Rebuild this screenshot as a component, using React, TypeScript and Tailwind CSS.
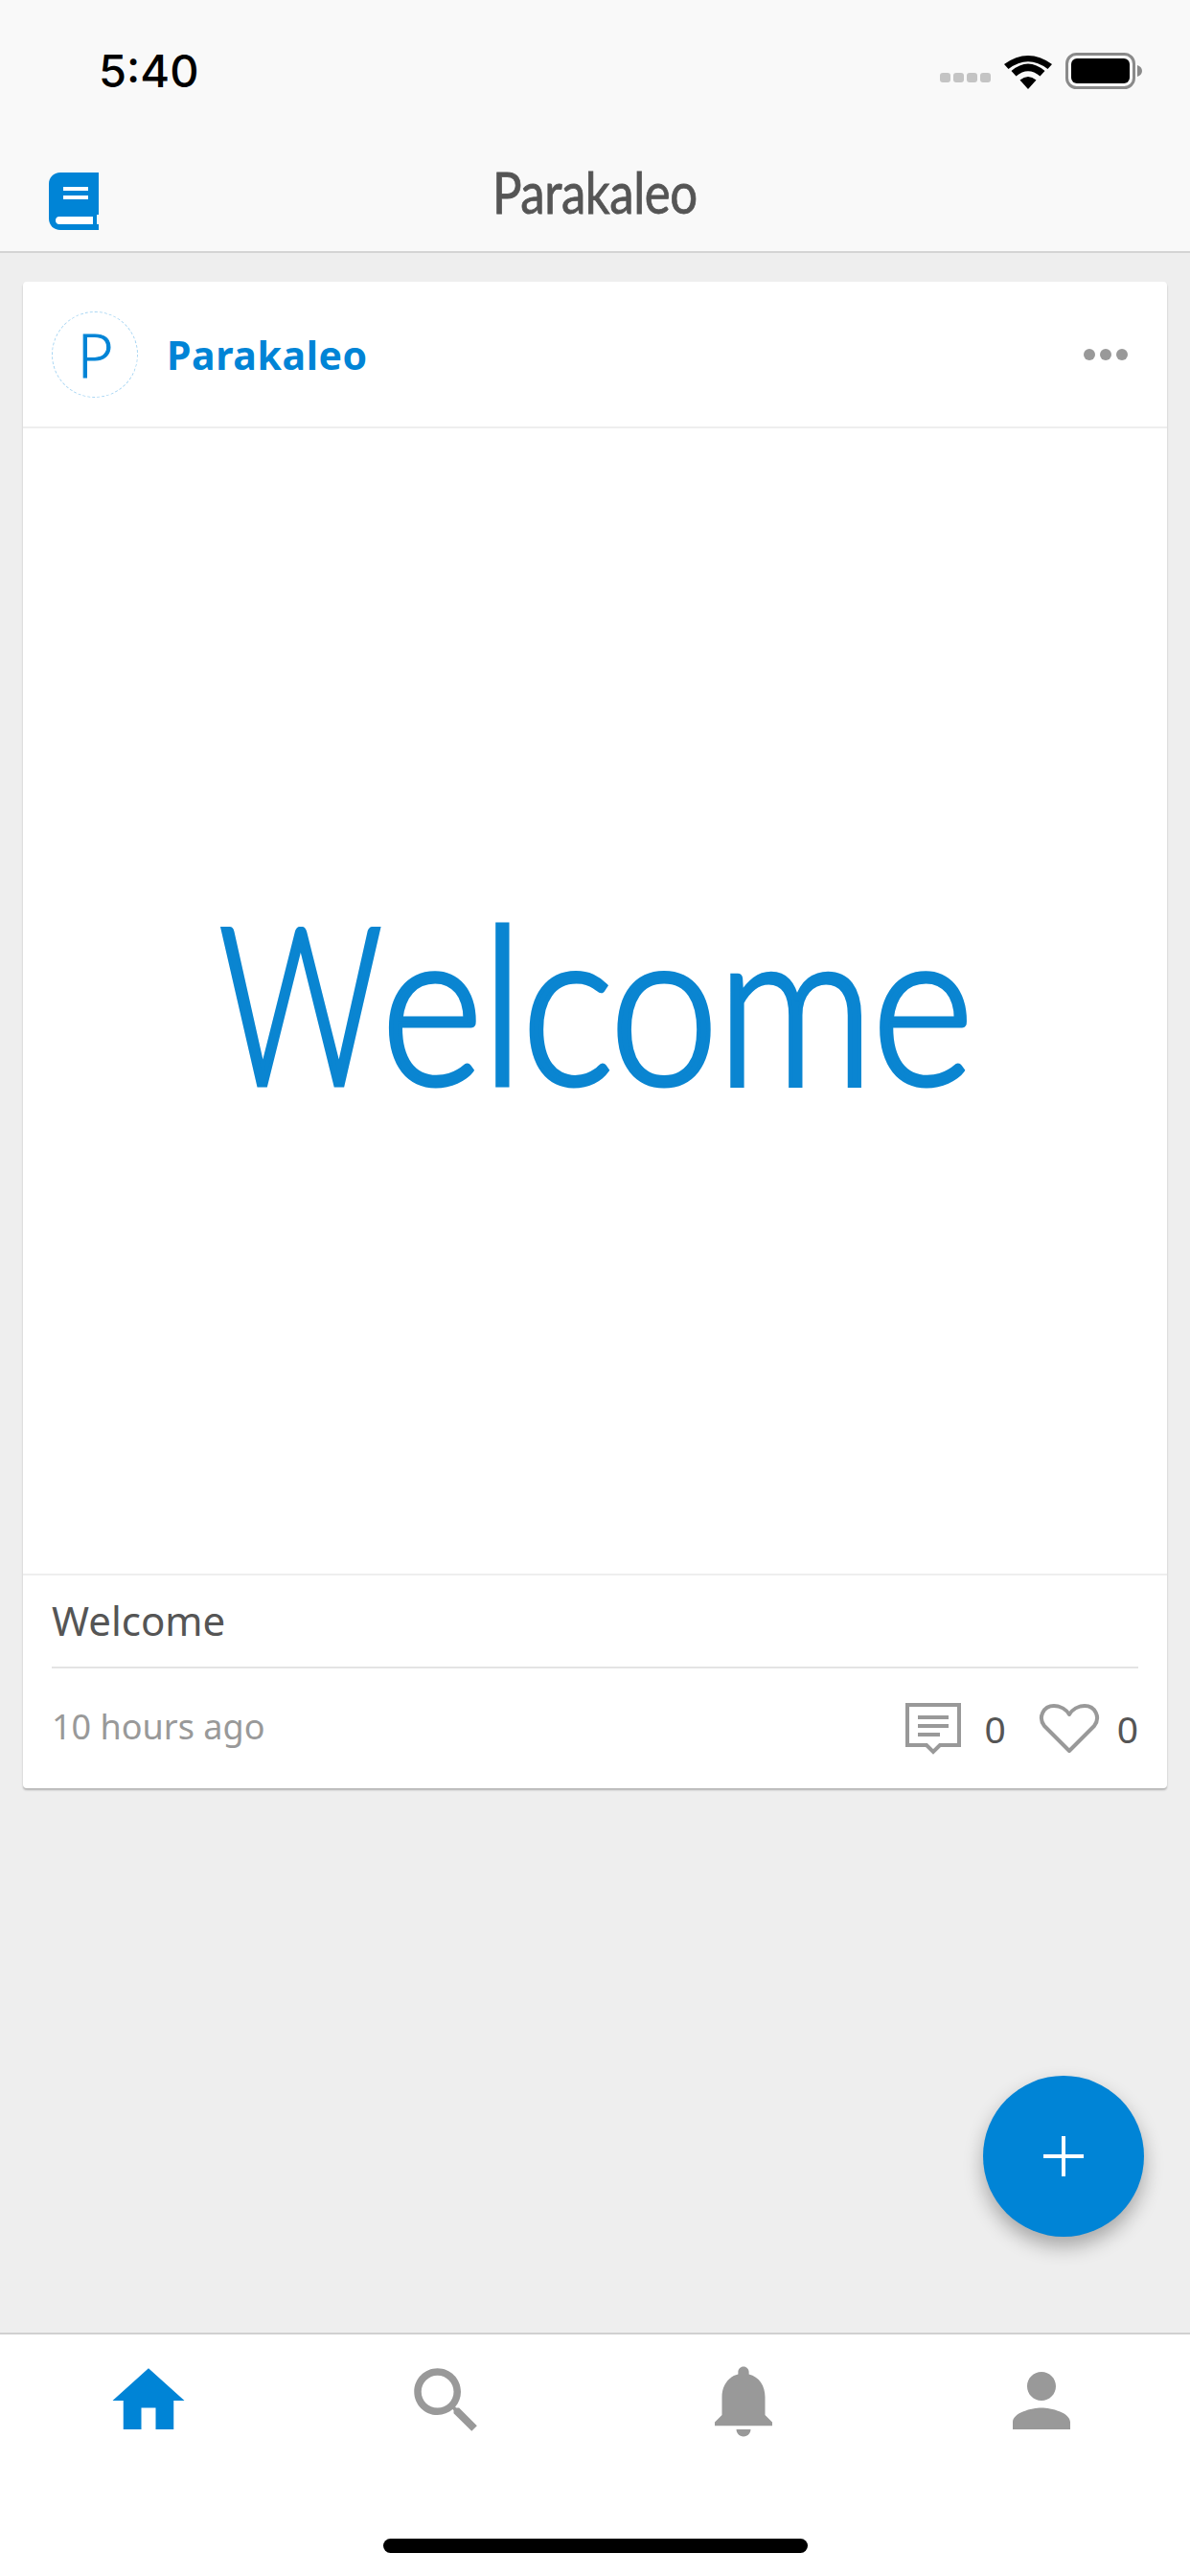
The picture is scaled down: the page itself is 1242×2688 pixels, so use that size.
import React from 'react'

const BLUE = 'text-[#0084d6]'

const icons: { d: string; color: string }[] = [
    { d: 'M10 20v-6h4v6h5v-8h3L12 3 2 12h3v8z', color: BLUE },
    { d: 'M15.5 14h-.79l-.28-.27C15.41 12.59 16 11.11 16 9.5 16 5.91 13.09 3 9.5 3S3 5.91 3 9.5 5.91 16 9.5 16c1.61 0 3.09-.59 4.23-1.57l.27.28v.79l5 4.99L20.49 19l-4.99-5zm-6 0C7.01 14 5 11.99 5 9.5S7.01 5 9.5 5 14 7.01 14 9.5 11.99 14 9.5 14z', color: 'text-[#999999]' },
    { d: 'M12 22c1.1 0 2-.9 2-2h-4c0 1.1.89 2 2 2zm6-6v-5c0-3.07-1.64-5.64-4.5-6.32V4c0-.83-.67-1.5-1.5-1.5s-1.5.67-1.5 1.5v.68C7.63 5.36 6 7.92 6 11v5l-2 2v1h16v-1l-2-2z', color: 'text-[#999999]' },
    { d: 'M12 12c2.21 0 4-1.79 4-4s-1.79-4-4-4-4 1.79-4 4 1.79 4 4 4zm0 2c-2.67 0-8 1.34-8 4v2h16v-2c0-2.66-5.33-4-8-4z', color: 'text-[#999999]' },
]

const StatusIcons = () => (
    <div className="flex items-center pt-[9px]">
        <div className="flex gap-[3px] mt-[14px]">
            {[0, 1, 2, 3].map(i => (
                <span key={i} className="h-[10px] w-[11px] rounded-[3px] bg-[#c4c4c4]" />
            ))}
        </div>
        <svg className="ml-[14px] h-[37px] w-[50px]" viewBox="0 0 50 37">
            <path d="M25 37 L16.5 27.5 Q25 20.5 33.5 27.5 Z" fill="#000" />
            <path d="M12.5 23 L7.5 17.5 Q25 2.5 42.5 17.5 L37.5 23 Q25 12.5 12.5 23 Z" transform="translate(0 0.5)" fill="#000" />
            <path d="M4.5 14 L0 9 Q25 -9 50 9 L45.5 14 Q25 -1.5 4.5 14 Z" transform="translate(0 2)" fill="#000" />
        </svg>
        <svg className="ml-[14px] h-[38px] w-[80px]" viewBox="0 0 80 38">
            <rect x="1.5" y="1.5" width="70" height="35" rx="10" fill="none" stroke="#8a8a8a" strokeWidth="3" />
            <rect x="6" y="6" width="61" height="26" rx="6" fill="#000" />
            <path d="M75 13 C78 14 80 16 80 19 C80 22 78 24 75 25 Z" fill="#8a8a8a" />
        </svg>
    </div>
)

const BookIcon = () => (
    <svg className="h-[60px] w-[52px] text-[#0084d6]" viewBox="0 0 52 60">
        <path d="M12 0 H52 V44 H50 V54 H52 V60 H12 C5 60 0 55 0 48 V12 C0 5 5 0 12 0 Z" fill="currentColor" />
        <rect x="15" y="15" width="26" height="4" fill="#fff" />
        <rect x="15" y="24" width="26" height="4" fill="#fff" />
        <path d="M11 46 H46 V54 H11 C8 54 7 52 7 50 C7 48 8 46 11 46 Z" fill="#fff" />
    </svg>
)

const CommentIcon = () => (
    <svg className="h-[54px] w-[58px]" viewBox="0 0 58 54" fill="none">
        <path d="M2 2 H56 V44 H36 L29 51 L22 44 H2 Z" stroke="#999" strokeWidth="4" />
        <rect x="13" y="13" width="32" height="4" fill="#999" />
        <rect x="13" y="22" width="32" height="4" fill="#999" />
        <rect x="13" y="31" width="23" height="4" fill="#999" />
    </svg>
)

const HeartIcon = () => (
    <svg className="h-[54px] w-[64px]" viewBox="0 0 64 54" fill="none">
        <path d="M32 50 L6 24 C-1 15 5 3 16 3 C23 3 29 7 32 12 C35 7 41 3 48 3 C59 3 65 15 58 24 Z" stroke="#999" strokeWidth="4" strokeLinejoin="round" />
    </svg>
)

export default function App() {
    return (
        <div className="relative flex h-[2688px] w-[1242px] flex-col overflow-hidden bg-[#eeeeee] font-['Noto_Sans',sans-serif]">
            {/* Nav header */}
            <header className="h-[264px] shrink-0 border-b-[2px] border-[#d4d4d4] bg-[#f9f9f9]">
                <div className="flex h-[150px] items-start justify-between pl-[103px] pr-[50px] pt-[46px]">
                    <span className="font-['Inter',sans-serif] text-[47px] leading-[56px] font-medium text-black">5:40</span>
                    <StatusIcons />
                </div>
                <div className="relative flex h-[112px] items-start justify-center">
                    <div className="absolute left-[51px] top-[30px]">
                        <BookIcon />
                    </div>
                    <span className="mt-[19px] scale-x-[0.85] font-['Lato',sans-serif] text-[60px] leading-[62px] tracking-[-0.5px] text-[#555555] [-webkit-text-stroke:0.8px_#555555]">Parakaleo</span>
                </div>
            </header>

            {/* Post card */}
            <main className="flex-1 px-[24px] pt-[30px]">
                <article className="rounded-[4px] bg-white shadow-[0_2px_2px_rgba(0,0,0,0.25)]">
                    <div className="flex h-[153px] items-center justify-between border-b-[2px] border-[#eeeeee] pl-[30px] pr-[40px]">
                        <div className="flex items-center gap-[30px]">
                            <div className="flex h-[90px] w-[90px] items-center justify-center rounded-full border border-dashed border-[#a9d6f3] font-['Lato',sans-serif] text-[64px] leading-none font-light text-[#0084d6] [-webkit-text-stroke:1px_#0084d6]">
                                P
                            </div>
                            <span className="text-[41px] leading-[52px] font-bold tracking-[0.6px] text-[#0084d6]">Parakaleo</span>
                        </div>
                        <div className="flex gap-[5px] pr-[1px]">
                            {[0, 1, 2].map(i => (
                                <span key={i} className="h-[12px] w-[12px] rounded-full bg-[#999999]" />
                            ))}
                        </div>
                    </div>
                    <div className="flex h-[1197px] items-center justify-center border-b-[2px] border-[#eeeeee] pb-[4px]">
                        <span className="scale-x-[0.89] font-['Lato',sans-serif] text-[230px] leading-none font-light tracking-[-3px] text-[#0a85d1] [-webkit-text-stroke:5px_#0a85d1]">
                            <span className="mr-[-41px] inline-block origin-left scale-x-[0.82]">W</span>elcome
                        </span>
                    </div>
                    <div className="px-[30px]">
                        <div className="flex h-[97px] items-center border-b-[2px] border-[#e4e4e4] pb-[3px] text-[42px] text-[#555555]">Welcome</div>
                        <div className="flex h-[125px] items-center justify-between">
                            <span className="pb-[3px] text-[36px] text-[#999999]">10 hours ago</span>
                            <div className="flex items-center text-[39px] leading-none text-[#555555]">
                                <CommentIcon />
                                <span className="ml-[24px]">0</span>
                                <span className="ml-[34px]"><HeartIcon /></span>
                                <span className="ml-[18px]">0</span>
                            </div>
                        </div>
                    </div>
                </article>
            </main>

            {/* FAB */}
            <button className="absolute left-[1026px] top-[2166px] flex h-[168px] w-[168px] items-center justify-center rounded-full bg-[#0084d6] shadow-[0_10px_20px_rgba(0,0,0,0.3)]">
                <svg className="h-[42px] w-[42px]" viewBox="0 0 42 42">
                    <rect x="19" y="0" width="4" height="42" fill="#fff" />
                    <rect x="0" y="19" width="42" height="4" fill="#fff" />
                </svg>
            </button>

            {/* Tab bar */}
            <nav className="h-[254px] shrink-0 border-t-[2px] border-[#d0d0d0] bg-white">
                <div className="grid grid-cols-4 pt-[24px]">
                    {icons.map(icon => (
                        <div key={icon.d} className={`flex justify-center ${icon.color}`}>
                            <svg className="h-[90px] w-[90px]" viewBox="0 0 24 24" fill="currentColor">
                                <path d={icon.d} />
                            </svg>
                        </div>
                    ))}
                </div>
                <div className="mx-auto mt-[99px] h-[15px] w-[443px] rounded-full bg-black" />
            </nav>
        </div>
    )
}
